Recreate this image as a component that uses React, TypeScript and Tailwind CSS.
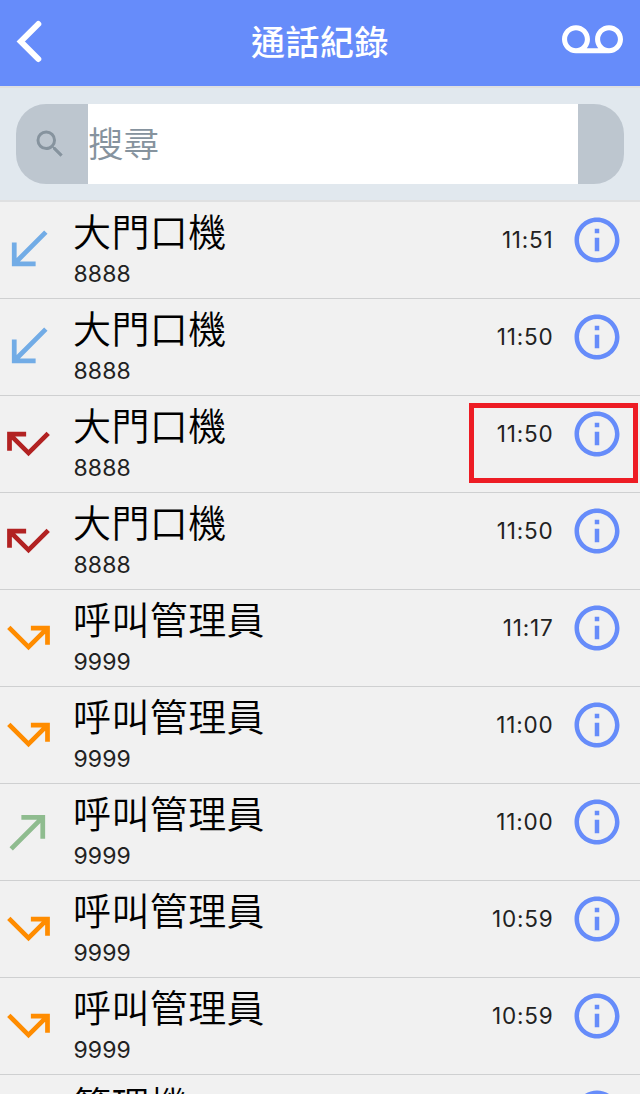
import React from 'react';
import type { IconType } from 'react-icons';
import {
  MdCallMade,
  MdCallMissed,
  MdCallMissedOutgoing,
  MdCallReceived,
  MdInfoOutline,
  MdSearch,
  MdVoicemail,
} from 'react-icons/md';

type CallType = 'received' | 'missed' | 'missedOutgoing' | 'made';

interface CallRecord {
  type: CallType;
  name: string;
  number: string;
  time: string;
  highlighted?: boolean;
}

const calls: CallRecord[] = [
  { type: 'received', name: '大門口機', number: '8888', time: '11:51' },
  { type: 'received', name: '大門口機', number: '8888', time: '11:50' },
  { type: 'missed', name: '大門口機', number: '8888', time: '11:50', highlighted: true },
  { type: 'missed', name: '大門口機', number: '8888', time: '11:50' },
  { type: 'missedOutgoing', name: '呼叫管理員', number: '9999', time: '11:17' },
  { type: 'missedOutgoing', name: '呼叫管理員', number: '9999', time: '11:00' },
  { type: 'made', name: '呼叫管理員', number: '9999', time: '11:00' },
  { type: 'missedOutgoing', name: '呼叫管理員', number: '9999', time: '10:59' },
  { type: 'missedOutgoing', name: '呼叫管理員', number: '9999', time: '10:59' },
  { type: 'received', name: '管理機', number: '', time: '' },
];

const callIcons: Record<CallType, { Icon: IconType; color: string }> = {
  received: { Icon: MdCallReceived, color: 'text-[#72ace6]' },
  missed: { Icon: MdCallMissed, color: 'text-[#b22222]' },
  missedOutgoing: { Icon: MdCallMissedOutgoing, color: 'text-[#ff8c00]' },
  made: { Icon: MdCallMade, color: 'text-[#8fbc8f]' },
};

const Header: React.FC = () => (
  <header className="flex h-[86px] shrink-0 items-start justify-between bg-[#668cfa] text-white">
    <button className="mt-[19px] ml-[15px] w-[62px]">
      <svg width="30" height="45" viewBox="0 0 30 45" fill="none">
        <path
          d="M23.3 5 L5.8 22.5 L23.3 40"
          stroke="currentColor"
          strokeWidth="6"
          strokeLinecap="round"
        />
      </svg>
    </button>
    <h1 className="mt-[18px] pl-px text-[34px] leading-[50px] font-medium tracking-[0.5px]">
      通話紀錄
    </h1>
    <button className="mt-[9.5px] mr-[17px]">
      <MdVoicemail size={61} />
    </button>
  </header>
);

const SearchBar: React.FC = () => (
  <div className="h-[116px] shrink-0 border-y-2 border-[#dfe0e1] bg-[#e1e8ee] px-4 pt-4">
    <div className="flex h-20 overflow-hidden rounded-[30px] bg-[#bdc6cf]">
      <div className="flex w-[72px] items-center pl-4 text-[#86939e]">
        <MdSearch size={36} />
      </div>
      <input
        className="w-[490px] bg-white pt-0.5 text-[35.5px] font-[350] text-black outline-none placeholder:text-[#86939e]"
        placeholder="搜尋"
      />
    </div>
  </div>
);

const CallRow: React.FC<{ call: CallRecord }> = ({ call }) => {
  const { Icon, color } = callIcons[call.type];

  return (
    <li className="relative flex h-[97px] shrink-0 items-start border-b border-[#cfd0d1]">
      <div className={`mt-[19px] w-[73px] ${color}`}>
        <Icon size={57} />
      </div>
      <div className="flex-1">
        <p className="mt-[2px] h-[56px] text-[38px] leading-[56px] font-[350] tracking-[0.4px] text-black">
          {call.name}
        </p>
        <p className="pl-[0.5px] text-[23px] leading-[28px] tracking-[0.1px] text-[#222]">
          {call.number}
        </p>
      </div>
      <span className="mt-[24px] text-[22.5px] leading-[28px] tracking-[0.8px] text-[#222]">
        {call.time}
      </span>
      <button className="mt-[10.5px] mr-[16.5px] ml-4 text-[#668cfa]">
        <MdInfoOutline size={54} />
      </button>
      {call.highlighted && (
        <div className="absolute top-[7px] right-[2px] h-[80px] w-[169px] border-[5px] border-[#ed1c24]" />
      )}
    </li>
  );
};

const App: React.FC = () => (
  <div className="flex h-[1094px] w-[640px] flex-col overflow-hidden bg-[#f1f1f1] font-[Inter,'Noto_Sans_CJK_TC',sans-serif]">
    <Header />
    <SearchBar />
    <ul className="flex flex-col">
      {calls.map((call, index) => (
        <CallRow key={index} call={call} />
      ))}
    </ul>
  </div>
);

export default App;
